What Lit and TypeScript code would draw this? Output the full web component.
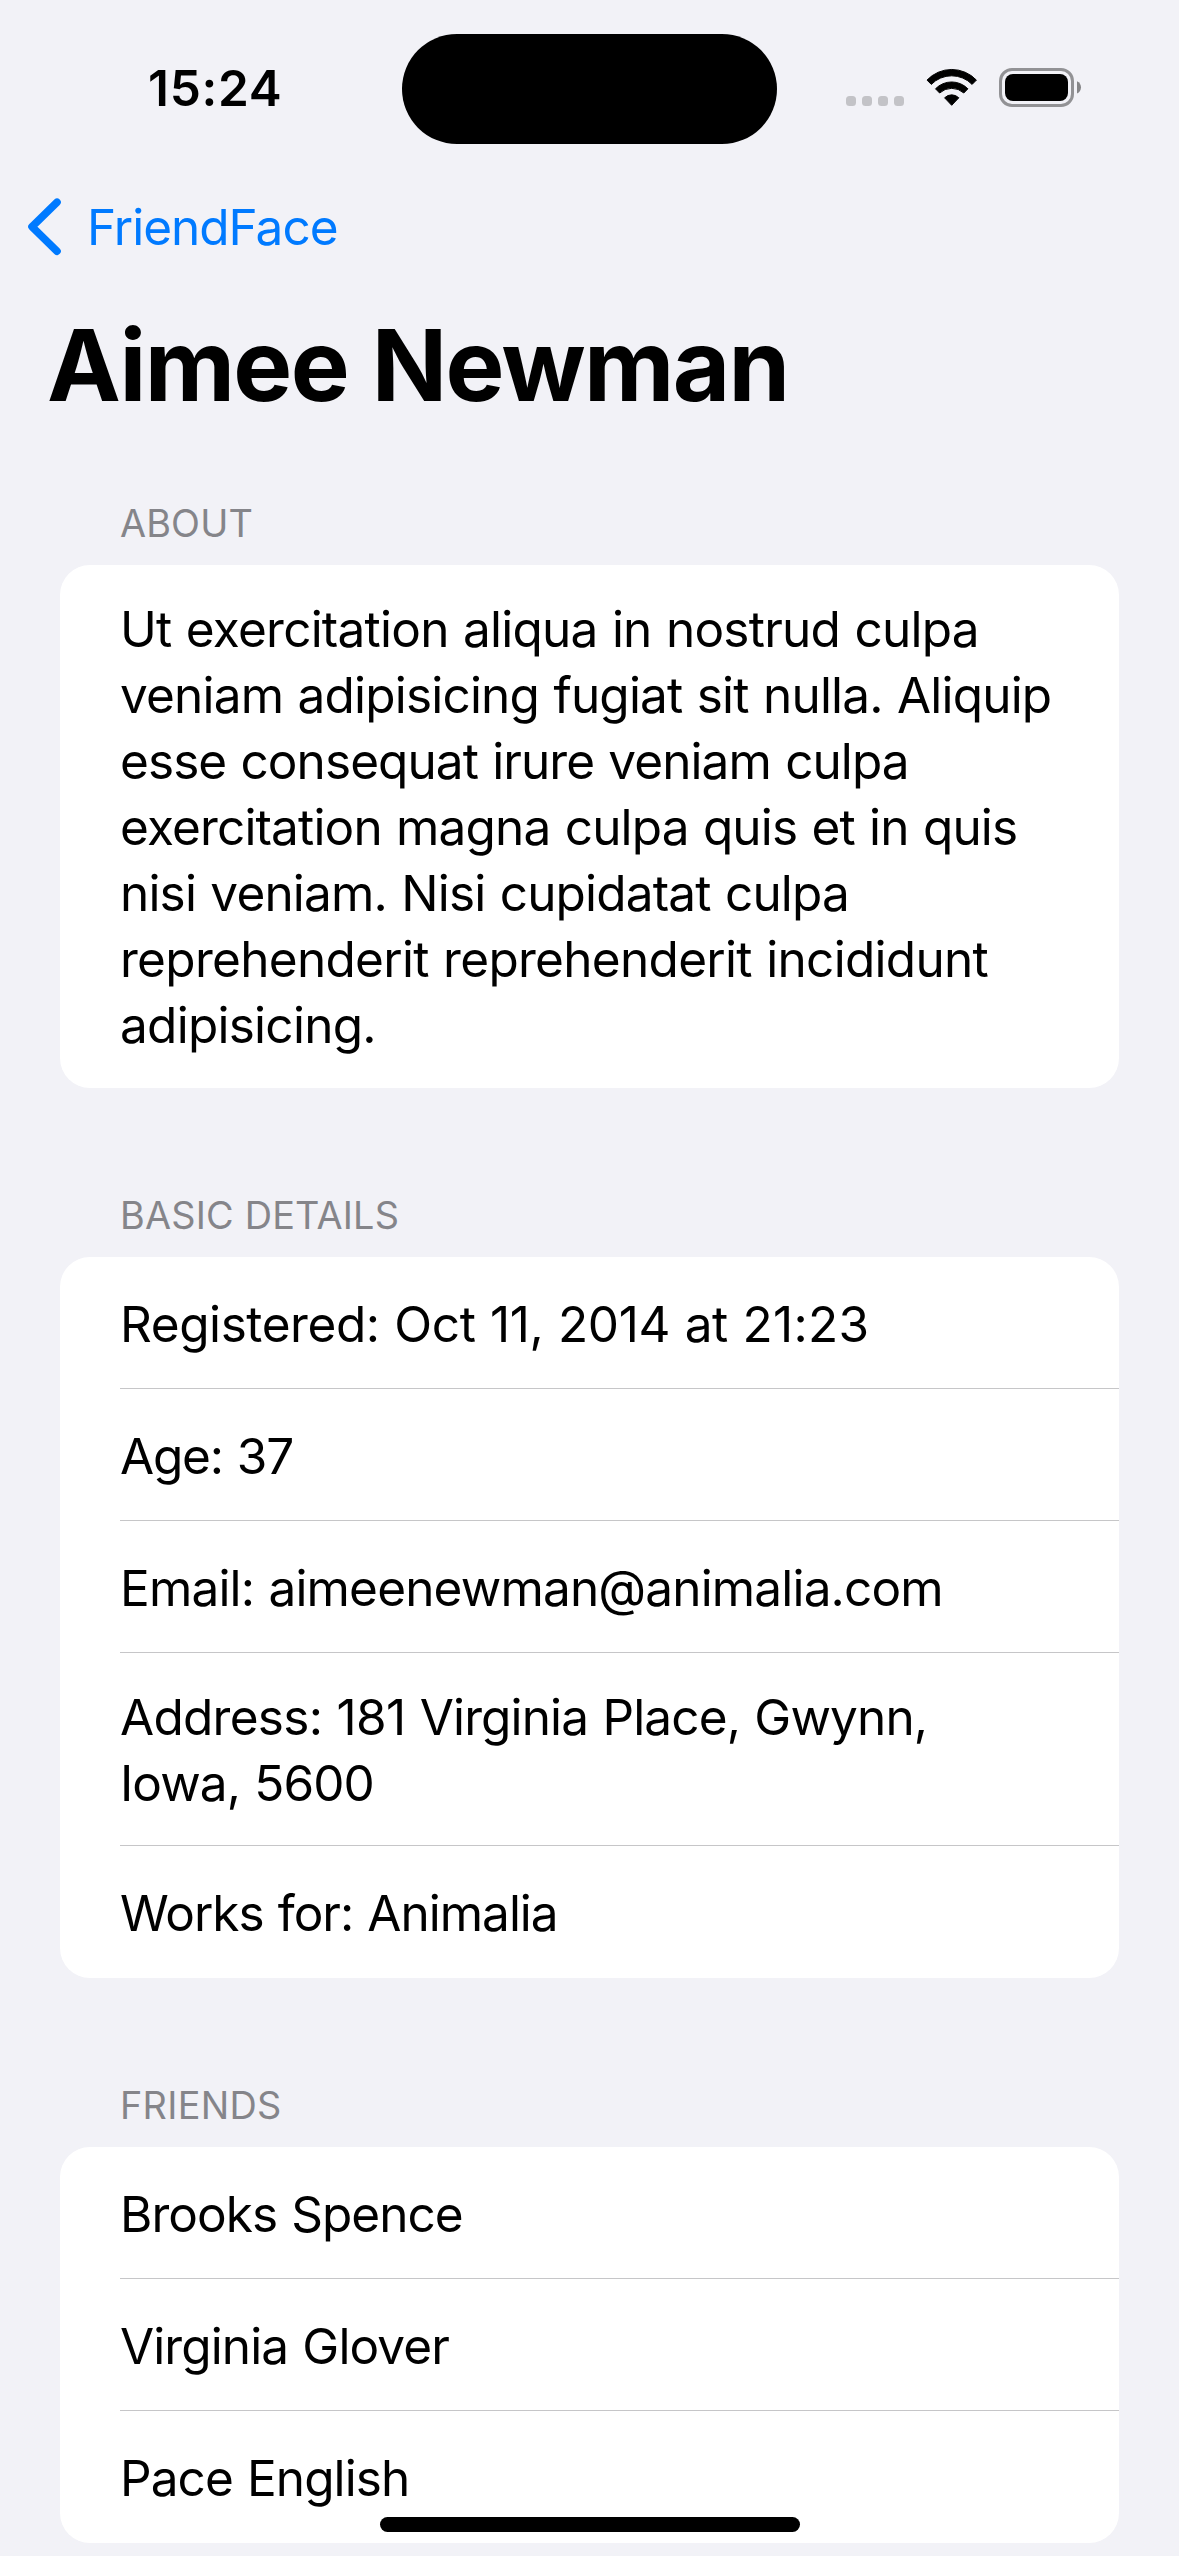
import { LitElement, html, css, nothing } from "lit";
import { customElement, property } from "lit/decorators.js";
import { styleMap } from "lit/directives/style-map.js";

/** One typeset line: its text and its letter tracking in pixels. */
interface Line {
  text: string;
  tracking: number;
  /** Trailing part of the line that is tracked differently. */
  tail?: Line;
}

interface Section {
  title: Line;
  rows: Line[][];
}

const SECTIONS: Section[] = [
  {
    title: { text: "ABOUT", tracking: 0.15 },
    rows: [
      [
        { text: "Ut exercitation aliqua in nostrud culpa", tracking: -0.765 },
        { text: "veniam adipisicing fugiat sit nulla. Aliquip", tracking: -0.807 },
        { text: "esse consequat irure veniam culpa", tracking: -0.92 },
        { text: "exercitation magna culpa quis et in quis", tracking: -0.844 },
        { text: "nisi veniam. Nisi cupidatat culpa", tracking: -0.822 },
        { text: "reprehenderit reprehenderit incididunt", tracking: -0.7 },
        { text: "adipisicing.", tracking: -0.736 },
      ],
    ],
  },
  {
    title: { text: "BASIC DETAILS", tracking: 0.2 },
    rows: [
      [
        {
          text: "Registered: Oct 11, 2014 at ",
          tracking: -0.42,
          tail: { text: "21:23", tracking: 0.3 },
        },
      ],
      [{ text: "Age: 37", tracking: -1.2 }],
      [{ text: "Email: aimeenewman@animalia.com", tracking: -0.83 }],
      [
        {
          text: "Address: 181 ",
          tracking: -0.72,
          tail: { text: "Virginia Place, Gwynn,", tracking: -0.86 },
        },
        { text: "Iowa, 5600", tracking: -0.92 },
      ],
      [{ text: "Works for: Animalia", tracking: -1 }],
    ],
  },
  {
    title: { text: "FRIENDS", tracking: 0.3 },
    rows: [
      [{ text: "Brooks Spence", tracking: -0.967 }],
      [{ text: "Virginia Glover", tracking: -0.9 }],
      [{ text: "Pace English", tracking: -0.93 }],
    ],
  },
];

const tracked = (line: Line) => styleMap({ letterSpacing: `${line.tracking}px` });

@customElement("status-bar")
export class StatusBar extends LitElement {
  static styles = css`
    :host {
      display: grid;
      grid-template-columns: 402px 375px 1fr;
      align-items: start;
      height: 194px;
    }
    .time {
      padding: 55px 0 0 148px;
      font-weight: 600;
      line-height: 66px;
      letter-spacing: 0.7px;
    }
    .island {
      height: 110px;
      margin-top: 34px;
      border-radius: 55px;
      background: #000;
    }
    .icons {
      display: flex;
      gap: 22px;
      padding: 68px 0 0 69px;
    }
    svg {
      display: block;
      flex: none;
    }
  `;

  render() {
    return html`
      <div class="time">15:24</div>
      <div class="island"></div>
      <div class="icons">
        <svg width="58" height="39" viewBox="0 0 58 39" fill="#c3c3c7">
          <rect x="0" y="28" width="10" height="10" rx="3.5" />
          <rect x="16" y="28" width="10" height="10" rx="3.5" />
          <rect x="32" y="28" width="10" height="10" rx="3.5" />
          <rect x="48" y="28" width="10" height="10" rx="3.5" />
        </svg>
        <svg width="51" height="39" viewBox="0 0 51 39" stroke="#000" stroke-width="1" stroke-linejoin="round">
          <path d="M1 12.1A34 34 0 0 1 50.4 12.1L46.1 16.4A28.5 28.5 0 0 0 5.3 16.4Z" />
          <path d="M9.5 20.8A22.6 22.6 0 0 1 41.9 20.8L37.8 25A18 18 0 0 0 13.6 25Z" />
          <path d="M18.6 29.8A10 10 0 0 1 32.8 29.8L25.7 37.3Z" />
        </svg>
        <svg width="83" height="39" viewBox="0 0 83 39">
          <rect x="1.5" y="1.5" width="72" height="36" rx="11.5" fill="none" stroke="#929295" stroke-width="3" />
          <rect x="6" y="6" width="63" height="27" rx="8" />
          <path d="M78 13.2C83.3 15 83.3 23.6 78 25.4Z" fill="#868688" />
        </svg>
      </div>
    `;
  }
}

@customElement("list-section")
export class ListSection extends LitElement {
  @property({ attribute: false }) section!: Section;

  static styles = css`
    :host {
      display: block;
    }
    .header {
      padding: 0 60px 19px;
      font-size: 37.8px;
      font-weight: 400;
      line-height: 46px;
      color: #85858a;
      margin: 0;
    }
    .card {
      border-radius: 30px;
      background: #fff;
      overflow: hidden;
    }
    .row {
      margin-left: 60px;
      padding: 31px 0 29px;
      border-bottom: 1px solid #c6c6c8;
      line-height: 66px;
      word-spacing: 1.2px;
      white-space: nowrap;
    }
    .row.single {
      padding: 34px 0 31px;
    }
    .row:last-child {
      border-bottom-color: transparent;
    }
  `;

  private line(line: Line) {
    const { text, tail } = line;
    return html`<div style=${tracked(line)}>${text}${tail
      ? html`<span style=${tracked(tail)}>${tail.text}</span>`
      : nothing}</div>`;
  }

  render() {
    const { title, rows } = this.section;
    return html`
      <h2 class="header" style=${tracked(title)}>${title.text}</h2>
      <div class="card">
        ${rows.map(
          (lines) => html`
            <div class="row ${lines.length === 1 ? "single" : ""}">
              ${lines.map((line) => this.line(line))}
            </div>
          `,
        )}
      </div>
    `;
  }
}

@customElement("app-root")
export class AppRoot extends LitElement {
  static styles = css`
    :host {
      display: block;
      position: relative;
      width: 1179px;
      height: 2556px;
      overflow: hidden;
      background: #f2f2f7;
      color: #000;
      font-family: Inter, "Liberation Sans", sans-serif;
      font-size: 49.5px;
    }
    .nav {
      display: flex;
      align-items: center;
      gap: 26px;
      padding-left: 27px;
      line-height: 66px;
      letter-spacing: -1px;
      color: #007aff;
    }
    .chevron {
      display: block;
      flex: none;
    }
    .title {
      margin: 45px 0 75px;
      padding-left: 47px;
      font-size: 99px;
      font-weight: 700;
      line-height: 120px;
      letter-spacing: -1.66px;
      word-spacing: 2px;
    }
    .list {
      display: flex;
      flex-direction: column;
      gap: 104px;
      padding: 0 60px;
    }
    .home {
      position: absolute;
      left: 380px;
      bottom: 24px;
      width: 420px;
      height: 15px;
      border-radius: 7.5px;
      background: #000;
    }
  `;

  render() {
    return html`
      <status-bar></status-bar>
      <div class="nav">
        <svg class="chevron" width="34" height="58" viewBox="0 0 34 58" fill="none" stroke="#007aff"
          stroke-width="7.6" stroke-linecap="round" stroke-linejoin="round">
          <path d="M30 4.2L5 28.7L30 53.2" />
        </svg>
        <span>FriendFace</span>
      </div>
      <h1 class="title">Aimee Newman</h1>
      <div class="list">
        ${SECTIONS.map((section) => html`<list-section .section=${section}></list-section>`)}
      </div>
      <div class="home"></div>
    `;
  }
}
